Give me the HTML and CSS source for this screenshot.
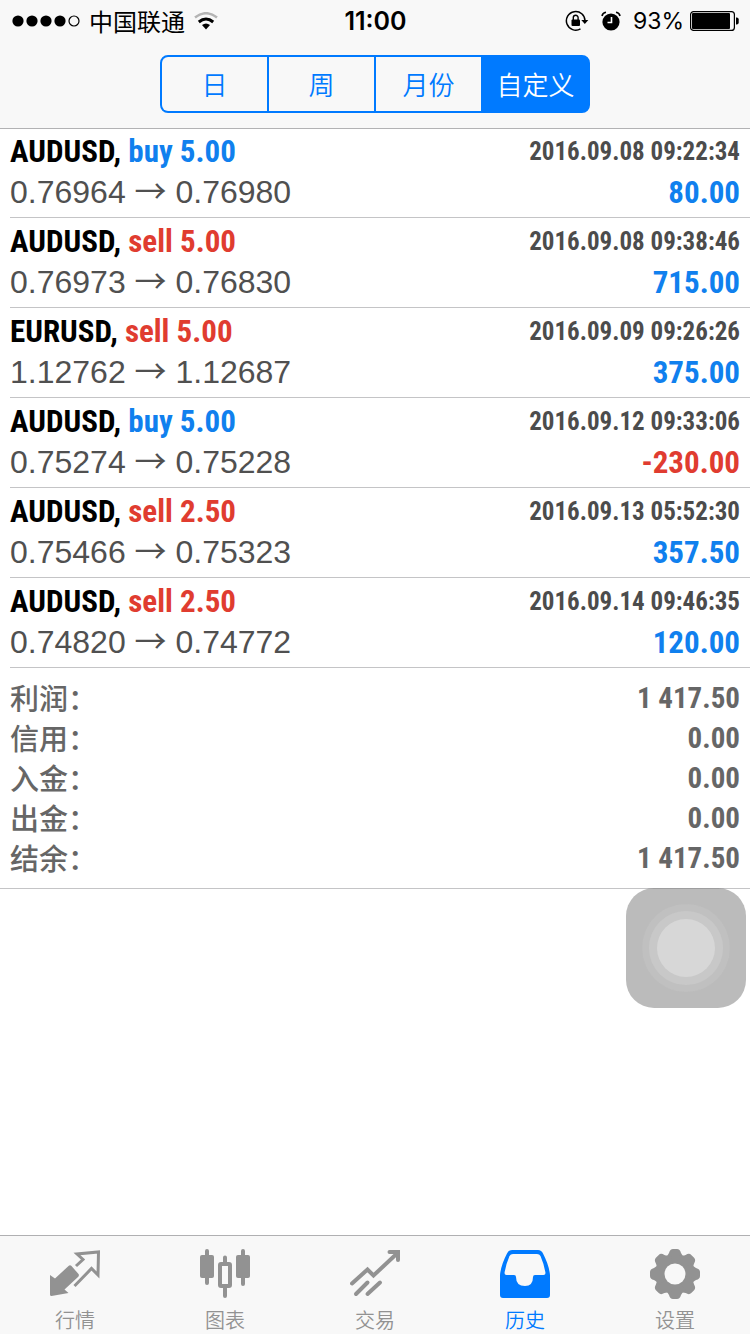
FILE: index.html
```
<!DOCTYPE html>
<html lang="zh-CN">
<head>
<meta charset="utf-8">
<meta name="viewport" content="width=device-width, initial-scale=1">
<title>历史</title>
<link rel="stylesheet" href="styles.css">
</head>
<body>
<header class="top">
  <div class="status">
    <div class="status-side">
      <svg class="signal" width="68" height="12" viewBox="0 0 68 12" aria-hidden="true">
        <circle cx="6" cy="6" r="5.6"/><circle cx="20" cy="6" r="5.6"/><circle cx="34" cy="6" r="5.6"/><circle cx="48" cy="6" r="5.6"/>
        <circle cx="62" cy="6" r="5" fill="none" stroke="#000" stroke-width="1.2"/>
      </svg>
      <span class="carrier">中国联通</span>
      <svg class="wifi" width="24" height="18" viewBox="0 0 24 18" aria-hidden="true">
        <path d="M1 5.5Q12-3 23 5.5" fill="none" stroke="#b4b4b4" stroke-width="2.6"/>
        <path d="M4.8 10Q12 4 19.2 10" fill="none" stroke="#000" stroke-width="3"/>
        <path d="M8 13Q12 9.800 16 13L12 17.500Z"/>
      </svg>
    </div>
    <time class="clock">11:00</time>
    <div class="status-side status-right">
      <svg width="24" height="22" viewBox="0 0 24 22" aria-hidden="true">
        <path d="M20 11A9.300 9.300 0 1 0 15.500 18.800" fill="none" stroke="#000" stroke-width="1.500"/>
        <path d="M16.300 10H23.300L19.800 14Z"/>
        <rect x="6.500" y="9.500" width="8.500" height="6.500" rx="1"/>
        <path d="M8.300 10V7.600a2.400 2.400 0 0 1 4.800 0V10" fill="none" stroke="#000" stroke-width="1.400"/>
      </svg>
      <svg class="alarm" width="20" height="20" viewBox="0 0 20 20" aria-hidden="true">
        <circle cx="10" cy="11" r="8.600"/>
        <path d="M1 5Q1.500 2 5 1.300M19 5Q18.500 2 15 1.300" fill="none" stroke="#000" stroke-width="1.600"/>
        <path d="M10.500 6V11.500H6.500" fill="none" stroke="#fff" stroke-width="1.600"/>
      </svg>
      <span class="percent">93%</span>
      <svg width="49" height="20" viewBox="0 0 49 20" aria-hidden="true">
        <rect x=".6" y=".6" width="43.800" height="18.800" rx="3" fill="none" stroke="#000" stroke-width="1.200"/>
        <rect x="2" y="2" width="38" height="16" rx="1"/>
        <path d="M46 6.500h.7q2 0 2 2v3q0 2-2 2H46z"/>
      </svg>
    </div>
  </div>
  <nav class="segments" aria-label="时间范围">
    <button class="segment" type="button">日</button>
    <button class="segment" type="button">周</button>
    <button class="segment" type="button">月份</button>
    <button class="segment selected" type="button" aria-pressed="true">自定义</button>
  </nav>
</header>

<main class="content">
  <ul class="deals">
    <li class="deal">
      <div class="line"><span class="symbol">AUDUSD, <span class="buy">buy 5.00</span></span><time class="date">2016.09.08 09:22:34</time></div>
      <div class="line"><span class="price">0.76964 <span class="arrow">→</span> 0.76980</span><span class="amount buy">80.00</span></div>
    </li>
    <li class="deal">
      <div class="line"><span class="symbol">AUDUSD, <span class="sell">sell 5.00</span></span><time class="date">2016.09.08 09:38:46</time></div>
      <div class="line"><span class="price">0.76973 <span class="arrow">→</span> 0.76830</span><span class="amount buy">715.00</span></div>
    </li>
    <li class="deal">
      <div class="line"><span class="symbol">EURUSD, <span class="sell">sell 5.00</span></span><time class="date">2016.09.09 09:26:26</time></div>
      <div class="line"><span class="price">1.12762 <span class="arrow">→</span> 1.12687</span><span class="amount buy">375.00</span></div>
    </li>
    <li class="deal">
      <div class="line"><span class="symbol">AUDUSD, <span class="buy">buy 5.00</span></span><time class="date">2016.09.12 09:33:06</time></div>
      <div class="line"><span class="price">0.75274 <span class="arrow">→</span> 0.75228</span><span class="amount sell">-230.00</span></div>
    </li>
    <li class="deal">
      <div class="line"><span class="symbol">AUDUSD, <span class="sell">sell 2.50</span></span><time class="date">2016.09.13 05:52:30</time></div>
      <div class="line"><span class="price">0.75466 <span class="arrow">→</span> 0.75323</span><span class="amount buy">357.50</span></div>
    </li>
    <li class="deal">
      <div class="line"><span class="symbol">AUDUSD, <span class="sell">sell 2.50</span></span><time class="date">2016.09.14 09:46:35</time></div>
      <div class="line"><span class="price">0.74820 <span class="arrow">→</span> 0.74772</span><span class="amount buy">120.00</span></div>
    </li>
  </ul>
  <dl class="summary">
    <div class="total"><dt>利润：</dt><dd>1 417.50</dd></div>
    <div class="total"><dt>信用：</dt><dd>0.00</dd></div>
    <div class="total"><dt>入金：</dt><dd>0.00</dd></div>
    <div class="total"><dt>出金：</dt><dd>0.00</dd></div>
    <div class="total"><dt>结余：</dt><dd>1 417.50</dd></div>
  </dl>
</main>

<button class="assist" type="button" aria-label="辅助触控"><span class="ring"><span class="ring-inner"><span class="dot"></span></span></span></button>

<nav class="tabs" aria-label="主导航">
  <a class="tab" href="#quotes">
    <svg width="50" height="50" viewBox="0 0 50 50" aria-hidden="true">
      <path d="M0 26L5 29.500L18.500 17Q20 15.500 21.500 17L28.500 25Q29.500 26.500 28 28L14.500 40.500L18.500 44L1.500 47Q0 47 0 45.500Z" fill="currentColor"/>
      <path d="M26 17L33 10.500L27 5L48.500 3L48 26L41.500 19.500L24.500 37" fill="none" stroke="currentColor" stroke-width="3"/>
    </svg>
    <span>行情</span>
  </a>
  <a class="tab" href="#charts">
    <svg width="50" height="50" viewBox="0 0 50 50" aria-hidden="true">
      <g fill="currentColor"><rect x="0" y="6" width="14" height="23" rx="2"/><rect x="36" y="6" width="14" height="23" rx="2"/></g>
      <g fill="none" stroke="currentColor" stroke-width="4" stroke-linecap="round">
        <path d="M7 2V34M43 2V35M25 8.500V14M25 38V47"/>
        <rect x="20" y="15" width="10" height="22" rx="1"/>
      </g>
    </svg>
    <span>图表</span>
  </a>
  <a class="tab" href="#trade">
    <svg width="50" height="50" viewBox="0 0 50 50" aria-hidden="true">
      <g fill="none" stroke="currentColor" stroke-width="4" stroke-linecap="round">
        <path d="M2 34.500L17.500 20.500L23.500 26.500L47 4.500"/>
        <path d="M6 45L17.500 33.500M17.500 45L30 33.500"/>
        <path d="M39.500 3H48V11" stroke-linecap="round"/>
      </g>
    </svg>
    <span>交易</span>
  </a>
  <a class="tab active" href="#history" aria-current="page">
    <svg width="50" height="50" viewBox="0 0 50 50" aria-hidden="true">
      <path fill="currentColor" fill-rule="evenodd" d="M12 1H38Q41.500 1 43 4.500Q49 16 50 26V46Q50 49 47 49H3Q0 49 0 46V26Q1 16 7 4.500Q8.500 1 12 1ZM13 5Q10.500 5 9.500 7Q6 15 4.500 24Q4.500 26 6.500 26H14Q16 26 16 28Q16 37 25 37Q33 37 33 28Q33 26 35 26H43.500Q45.500 26 45.500 24Q44 15 40.500 7Q39.500 5 37 5Z"/>
    </svg>
    <span>历史</span>
  </a>
  <a class="tab" href="#settings">
    <svg width="50" height="50" viewBox="0 0 50 50" aria-hidden="true">
      <defs><path id="tooth" d="M14.500 8.500Q18 7 19 4Q20 0 23 0H27Q30 0 31 4Q32 7 35.500 8.500L25 25Z"/></defs>
      <mask id="hub"><rect width="50" height="50" fill="#fff"/><circle cx="25" cy="25" r="10.500" fill="#000"/></mask>
      <g fill="currentColor" mask="url(#hub)">
        <circle cx="25" cy="25" r="18.500"/>
        <use href="#tooth"/><use href="#tooth" transform="rotate(45 25 25)"/><use href="#tooth" transform="rotate(90 25 25)"/><use href="#tooth" transform="rotate(135 25 25)"/>
        <use href="#tooth" transform="rotate(180 25 25)"/><use href="#tooth" transform="rotate(225 25 25)"/><use href="#tooth" transform="rotate(270 25 25)"/><use href="#tooth" transform="rotate(315 25 25)"/>
      </g>
    </svg>
    <span>设置</span>
  </a>
</nav>
</body>
</html>
```
FILE: styles.css
```
:root {
  --blue: #007aff;
  --blue-text: #1080ee;
  --red: #e03c30;
  --bar: #f8f8f8;
  --rule: #c4c4c6;
  --sans: "Liberation Sans", "Noto Sans CJK SC", sans-serif;
  --cjk: "Noto Sans CJK SC", sans-serif;
  --narrow: "Roboto Condensed", "Liberation Sans Narrow", "Liberation Sans", "Noto Sans CJK SC", sans-serif;
}

* {
  box-sizing: border-box;
}

body {
  margin: 0;
  min-height: 100vh;
  display: flex;
  flex-direction: column;
  background: #fff;
  color: #000;
  font-family: var(--sans);
}

button {
  font: inherit;
}

.top {
  position: relative;
  height: 128px;
  background: var(--bar);
  box-shadow: 0 1px 0 #b2b2b4;
}

.status {
  display: grid;
  grid-template-columns: 1fr auto 1fr;
  align-items: center;
  height: 41px;
  padding: 0 11px 0 12px;
  font-size: 24px;
  line-height: 40px;
}

.status-side {
  display: flex;
  align-items: center;
}

.status-right {
  justify-content: flex-end;
}

.carrier {
  margin: 0 9px;
  font-family: var(--cjk);
  white-space: nowrap;
}

.clock {
  font-family: Inter, sans-serif;
  font-size: 25px;
  font-weight: 600;
}

.alarm {
  margin: 0 12px;
}

.percent {
  margin-right: 6px;
  font-family: Inter, sans-serif;
  font-size: 23px;
}

.segments {
  display: flex;
  width: 430px;
  max-width: calc(100% - 20px);
  height: 58px;
  margin: 14px auto 0;
  border: 2px solid var(--blue);
  border-radius: 8px;
  background: var(--blue);
  overflow: hidden;
}

.segment {
  flex: 1;
  padding: 0;
  border: 0;
  border-right: 2px solid var(--blue);
  background: var(--bar);
  color: var(--blue);
  font-family: var(--cjk);
  font-size: 26px;
  font-weight: 350;
  line-height: 52px;
}

.segment.selected {
  border-right: 0;
  background: var(--blue);
  color: #fff;
}

.content {
  flex: 1;
}

.deals {
  margin: 0;
  padding: 0 0 0 10px;
  list-style: none;
}

.deal {
  padding: 3px 10px 4px 0;
  border-bottom: 1px solid var(--rule);
}

.line {
  display: flex;
  justify-content: space-between;
  height: 41px;
  line-height: 41px;
  white-space: nowrap;
}

.symbol,
.date,
.amount,
.total dd {
  font-family: var(--narrow);
  font-weight: 700;
}

.symbol {
  font-size: 31px;
}

.date {
  color: #4c4c4c;
  font-size: 25px;
}

.price {
  color: #505050;
  font-size: 32px;
}

.arrow {
  font-family: var(--cjk);
  font-weight: 400;
  line-height: 1;
}

.amount {
  font-size: 31px;
}

.buy {
  color: var(--blue-text);
}

.sell {
  color: var(--red);
}

.summary {
  margin: 0;
  padding: 10px;
  border-bottom: 1px solid var(--rule);
  color: #666;
}

.total {
  display: flex;
  justify-content: space-between;
  height: 40px;
  font-size: 29px;
  line-height: 40px;
}

.total dt {
  font-family: var(--cjk);
  font-weight: 500;
  line-height: 38px;
}

.total dd {
  margin: 0;
}

.assist {
  position: fixed;
  top: 888px;
  right: 4px;
  display: grid;
  place-items: center;
  width: 120px;
  height: 120px;
  padding: 0;
  border: 0;
  border-radius: 28px;
  background: rgba(120, 120, 120, 0.5);
}

.ring,
.ring-inner,
.dot {
  display: grid;
  place-items: center;
  border-radius: 50%;
}

.ring {
  width: 88px;
  height: 88px;
  background: #c0c0c0;
}

.ring-inner {
  width: 74px;
  height: 74px;
  background: #c8c8c8;
}

.dot {
  width: 58px;
  height: 58px;
  background: #d7d7d7;
}

.tabs {
  display: flex;
  height: 99px;
  border-top: 1px solid #b0b0b2;
  background: var(--bar);
}

.tab {
  flex: 1;
  display: flex;
  flex-direction: column;
  align-items: center;
  gap: 7px;
  padding-top: 13px;
  color: #929292;
  font-family: var(--cjk);
  font-size: 20px;
  font-weight: 350;
  line-height: 28px;
  text-decoration: none;
}

.tab.active {
  color: var(--blue);
}
```
